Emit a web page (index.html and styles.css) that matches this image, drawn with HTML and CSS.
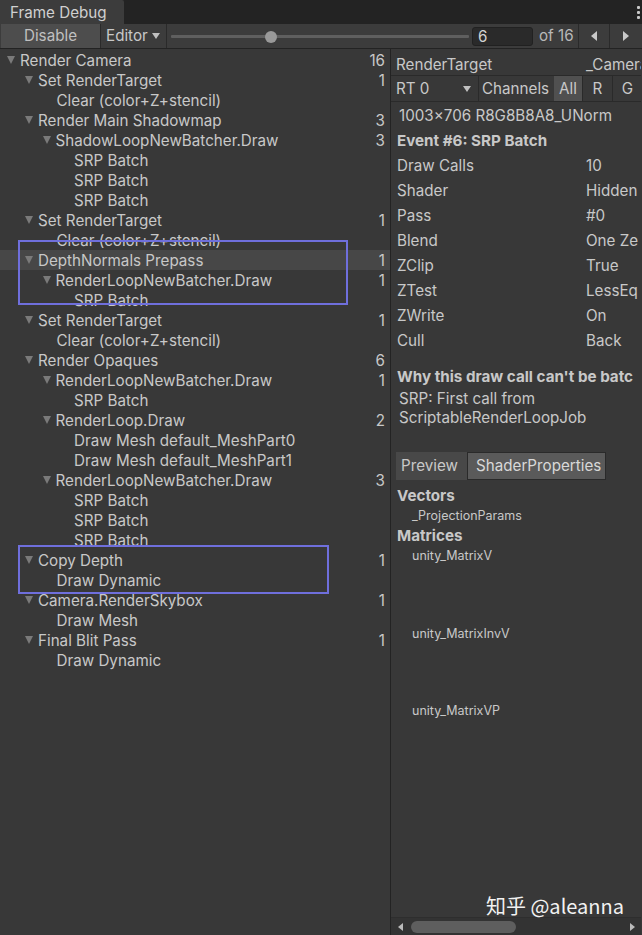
FILE: index.html
```html
<!DOCTYPE html>
<html>
<head>
<meta charset="utf-8">
<link rel="stylesheet" href="styles.css">
</head>
<body>
<div class="app">
  <div class="tabbar">
    <div class="tab">Frame Debug</div>
    <div class="kebab"><i></i><i></i><i></i></div>
  </div>
  <div class="toolbar">
    <div class="btn-disable">Disable</div>
    <div class="dd-editor">Editor <span class="caret"></span></div>
    <div class="slider"><div class="track"></div><div class="knob"></div></div>
    <div class="numfield">6</div>
    <div class="of">of 16</div>
    <div class="arrowbtn"><span class="tri-l"></span></div>
    <div class="arrowbtn"><span class="tri-r"></span></div>
  </div>
  <div class="main">
    <div class="tree">
      <div class="row l0 p"><span class="tri"></span><span class="name">Render Camera</span><span class="cnt">16</span></div>
      <div class="row l1 p"><span class="tri"></span><span class="name">Set RenderTarget</span><span class="cnt">1</span></div>
      <div class="row l2"><span class="name">Clear (color+Z+stencil)</span></div>
      <div class="row l1 p"><span class="tri"></span><span class="name">Render Main Shadowmap</span><span class="cnt">3</span></div>
      <div class="row l2 p"><span class="tri"></span><span class="name">ShadowLoopNewBatcher.Draw</span><span class="cnt">3</span></div>
      <div class="row l3"><span class="name">SRP Batch</span></div>
      <div class="row l3"><span class="name">SRP Batch</span></div>
      <div class="row l3"><span class="name">SRP Batch</span></div>
      <div class="row l1 p"><span class="tri"></span><span class="name">Set RenderTarget</span><span class="cnt">1</span></div>
      <div class="row l2"><span class="name">Clear (color+Z+stencil)</span></div>
      <div class="row l1 p sel"><span class="tri"></span><span class="name">DepthNormals Prepass</span><span class="cnt">1</span></div>
      <div class="row l2 p"><span class="tri"></span><span class="name">RenderLoopNewBatcher.Draw</span><span class="cnt">1</span></div>
      <div class="row l3"><span class="name">SRP Batch</span></div>
      <div class="row l1 p"><span class="tri"></span><span class="name">Set RenderTarget</span><span class="cnt">1</span></div>
      <div class="row l2"><span class="name">Clear (color+Z+stencil)</span></div>
      <div class="row l1 p"><span class="tri"></span><span class="name">Render Opaques</span><span class="cnt">6</span></div>
      <div class="row l2 p"><span class="tri"></span><span class="name">RenderLoopNewBatcher.Draw</span><span class="cnt">1</span></div>
      <div class="row l3"><span class="name">SRP Batch</span></div>
      <div class="row l2 p"><span class="tri"></span><span class="name">RenderLoop.Draw</span><span class="cnt">2</span></div>
      <div class="row l3"><span class="name">Draw Mesh default_MeshPart0</span></div>
      <div class="row l3"><span class="name">Draw Mesh default_MeshPart1</span></div>
      <div class="row l2 p"><span class="tri"></span><span class="name">RenderLoopNewBatcher.Draw</span><span class="cnt">3</span></div>
      <div class="row l3"><span class="name">SRP Batch</span></div>
      <div class="row l3"><span class="name">SRP Batch</span></div>
      <div class="row l3"><span class="name">SRP Batch</span></div>
      <div class="row l1 p"><span class="tri"></span><span class="name">Copy Depth</span><span class="cnt">1</span></div>
      <div class="row l2"><span class="name">Draw Dynamic</span></div>
      <div class="row l1 p"><span class="tri"></span><span class="name">Camera.RenderSkybox</span><span class="cnt">1</span></div>
      <div class="row l2"><span class="name">Draw Mesh</span></div>
      <div class="row l1 p"><span class="tri"></span><span class="name">Final Blit Pass</span><span class="cnt">1</span></div>
      <div class="row l2"><span class="name">Draw Dynamic</span></div>
      <div class="mark mark1"></div>
      <div class="mark mark2"></div>
    </div>
    <div class="details">
      <div class="rt-head"><span class="rt-label">RenderTarget</span><span class="rt-val">_Camera</span></div>
      <div class="rt-bar">
        <div class="rt-dd">RT 0 <span class="caret"></span></div>
        <div class="ch-label">Channels</div>
        <div class="ch-btn on">All</div>
        <div class="ch-btn">R</div>
        <div class="ch-btn">G</div>
      </div>
      <div class="fmt">1003x706 R8G8B8A8_UNorm</div>
      <div class="event">Event #6: SRP Batch</div>
      <div class="props">
        <div class="prop"><span class="k">Draw Calls</span><span class="v">10</span></div>
        <div class="prop"><span class="k">Shader</span><span class="v">Hidden</span></div>
        <div class="prop"><span class="k">Pass</span><span class="v">#0</span></div>
        <div class="prop"><span class="k">Blend</span><span class="v">One Ze</span></div>
        <div class="prop"><span class="k">ZClip</span><span class="v">True</span></div>
        <div class="prop"><span class="k">ZTest</span><span class="v">LessEq</span></div>
        <div class="prop"><span class="k">ZWrite</span><span class="v">On</span></div>
        <div class="prop"><span class="k">Cull</span><span class="v">Back</span></div>
      </div>
      <div class="why">Why this draw call can't be batc</div>
      <div class="reason">SRP: First call from<br>ScriptableRenderLoopJob</div>
      <div class="tabs">
        <div class="dtab">Preview</div>
        <div class="dtab active">ShaderProperties</div>
      </div>
      <div class="sec first">Vectors</div>
      <div class="item">_ProjectionParams</div>
      <div class="sec">Matrices</div>
      <div class="item mat">unity_MatrixV</div>
      <div class="item mat">unity_MatrixInvV</div>
      <div class="item mat">unity_MatrixVP</div>
      <div class="hscroll">
        <span class="tri-l small"></span>
        <div class="thumb"></div>
        <span class="tri-r small"></span>
      </div>
      <div class="watermark">知乎 @aleanna</div>
    </div>
  </div>
</div>
</body>
</html>
```
FILE: styles.css
```css
* { box-sizing: border-box; }
html, body { margin: 0; padding: 0; }
body {
  width: 642px;
  height: 935px;
  overflow: hidden;
  background: #383838;
  font-family: Inter, "Noto Sans", "Noto Sans CJK SC", sans-serif;
  font-size: 15.2px;
  color: #c8c8c8;
}
.app { display: flex; flex-direction: column; height: 935px; }

.tabbar {
  height: 24px;
  background: #232323;
  display: flex;
  align-items: stretch;
  justify-content: space-between;
  flex-shrink: 0;
}
.tab {
  width: 124px;
  background: #3c3c3c;
  padding-left: 10px;
  line-height: 25px;
  color: #d0d0d0;
  border-top-right-radius: 2px;
}
.kebab {
  width: 8px;
  display: flex;
  flex-direction: column;
  justify-content: center;
  gap: 2px;
  align-items: center;
}
.kebab i { display: block; width: 3px; height: 3px; background: #c8c8c8; border-radius: 1px; }

.toolbar {
  height: 25px;
  background: #3c3c3c;
  border-bottom: 1px solid #232323;
  display: flex;
  align-items: stretch;
  flex-shrink: 0;
}
.btn-disable {
  width: 100px;
  background: #4d4d4d;
  text-align: center;
  line-height: 24px;
  border-right: 1px solid #2a2a2a;
  margin-left: 1px;
  color: #c0c0c0;
}
.dd-editor {
  width: 66px;
  padding-left: 5px;
  line-height: 24px;
  border-right: 1px solid #2a2a2a;
  display: flex;
  align-items: center;
  gap: 4px;
}
.caret {
  display: inline-block;
  width: 0; height: 0;
  border-left: 4.5px solid transparent;
  border-right: 4.5px solid transparent;
  border-top: 6px solid #c0c0c0;
}
.slider { position: relative; width: 298px; margin-left: 4px; }
.slider .track { position: absolute; left: 0; right: 0; top: 11px; height: 3px; background: #5f5f5f; border-radius: 1px; }
.slider .knob { position: absolute; left: 94px; top: 7px; width: 12px; height: 12px; border-radius: 50%; background: #999; }
.numfield {
  margin: 3px 0 2px 3px;
  width: 61px;
  background: #2a2a2a;
  border: 1px solid #212121;
  border-radius: 3px;
  padding-left: 5px;
  line-height: 18px;
  color: #d2d2d2;
}
.of { width: 46px; padding-left: 6px; line-height: 24px; color: #b8b8b8; border-right: 1px solid #2a2a2a; }
.arrowbtn {
  width: 31px;
  display: flex; align-items: center; justify-content: center;
  border-right: 1px solid #2a2a2a;
}
.arrowbtn:last-child { border-right: none; flex: 1; }
.tri-l, .tri-r { display: inline-block; width: 0; height: 0; border-top: 5px solid transparent; border-bottom: 5px solid transparent; }
.tri-l { border-right: 6px solid #c8c8c8; }
.tri-r { border-left: 6px solid #c8c8c8; }

.main { flex: 1; display: flex; min-height: 0; }
.tree {
  position: relative;
  width: 391px;
  border-right: 1px solid #232323;
  padding-top: 1px;
  flex-shrink: 0;
}
.row {
  height: 20px;
  display: flex;
  align-items: center;
  padding-right: 5px;
  white-space: nowrap;
}
.row.sel { background: #474747; }
.row .name { flex: 1; }
.row .cnt { text-align: right; }
.row .tri {
  display: inline-block;
  width: 0; height: 0;
  border-left: 4.5px solid transparent;
  border-right: 4.5px solid transparent;
  border-top: 8px solid #7a7a7a;
  margin-right: 5px;
}
.l0 { padding-left: 21px; }
.l1 { padding-left: 39px; }
.l2 { padding-left: 56.5px; }
.l3 { padding-left: 74px; }
.l0.p { padding-left: 7px; }
.l1.p { padding-left: 25px; }
.l2.p { padding-left: 42.5px; }

.mark { position: absolute; border: 2px solid #6f6fdc; }
.mark1 { left: 18px; top: 191px; width: 330px; height: 65px; }
.mark2 { left: 18px; top: 496px; width: 311px; height: 49px; }

.details {
  position: relative;
  width: 250px;
  flex-shrink: 0;
  overflow: hidden;
  white-space: nowrap;
  display: flex;
  flex-direction: column;
}
.details > * { flex-shrink: 0; }
.rt-head {
  height: 27px;
  display: flex;
  align-items: center;
  padding-left: 5px;
  padding-top: 4px;
  border-bottom: 1px solid #2a2a2a;
}
.rt-label { width: 190px; flex-shrink: 0; }
.rt-bar {
  height: 26px;
  display: flex;
  align-items: stretch;
  border-bottom: 1px solid #2a2a2a;
}
.rt-dd {
  width: 88px;
  flex-shrink: 0;
  padding-left: 5px;
  display: flex; align-items: center;
  justify-content: space-between;
  padding-right: 7px;
  border-right: 1px solid #2a2a2a;
}
.ch-label { width: 75px; flex-shrink: 0; padding-left: 3px; display: flex; align-items: center; }
.ch-btn { width: 30px; display: flex; align-items: center; justify-content: center; border-right: 1px solid #2a2a2a; flex-shrink: 0; }
.ch-btn.on { background: #505050; width: 29px; }
.fmt { height: 24px; line-height: 26px; padding-left: 8px; margin-top: 1px; }
.event { height: 24px; line-height: 24px; padding-left: 6px; font-weight: 700; margin-top: 2px; }
.props { display: flex; flex-direction: column; }
.prop { height: 25px; display: flex; align-items: center; padding-left: 6px; }
.prop .k { width: 189px; flex-shrink: 0; }
.why { margin-top: 12px; height: 24px; line-height: 24px; padding-left: 6px; font-weight: 700; }
.reason { padding-left: 8px; line-height: 19px; }
.tabs { display: flex; margin: 25px 0 0 5px; height: 28px; }
.dtab { padding: 0 8px 0 5px; line-height: 28px; background: #484848; color: #c8c8c8; width: 71px; }
.dtab.active { background: #5a5a5a; border: 1px solid #2a2a2a; line-height: 26px; padding: 0 0 0 8px; width: 139px; color: #d8d8d8; }
.sec { font-weight: 700; padding-left: 6px; height: 20px; line-height: 20px; }
.sec.first { margin-top: 6px; }
.item { font-size: 12.5px; padding-left: 21px; height: 20px; line-height: 20px; }
.item.mat { height: 77.5px; }
.hscroll {
  position: absolute;
  left: 0; right: 0; bottom: 0;
  height: 18px;
  border-top: 1px solid #2e2e2e;
  background: #333;
  display: flex;
  align-items: center;
  padding: 0 6px 0 7px;
}
.tri-l.small, .tri-r.small { border-top-width: 4px; border-bottom-width: 4px; }
.tri-l.small { border-right: 5px solid #bbb; }
.tri-r.small { border-left: 5px solid #bbb; margin-left: auto; }
.hscroll .thumb { width: 105px; height: 12px; background: #5e5e5e; border-radius: 6px; margin-left: 8px; }
.watermark {
  position: absolute;
  right: 17px;
  bottom: 15px;
  font-size: 20px;
  color: #f2f2f2;
  font-family: "Noto Sans CJK SC", "Noto Sans", sans-serif;
}
```
